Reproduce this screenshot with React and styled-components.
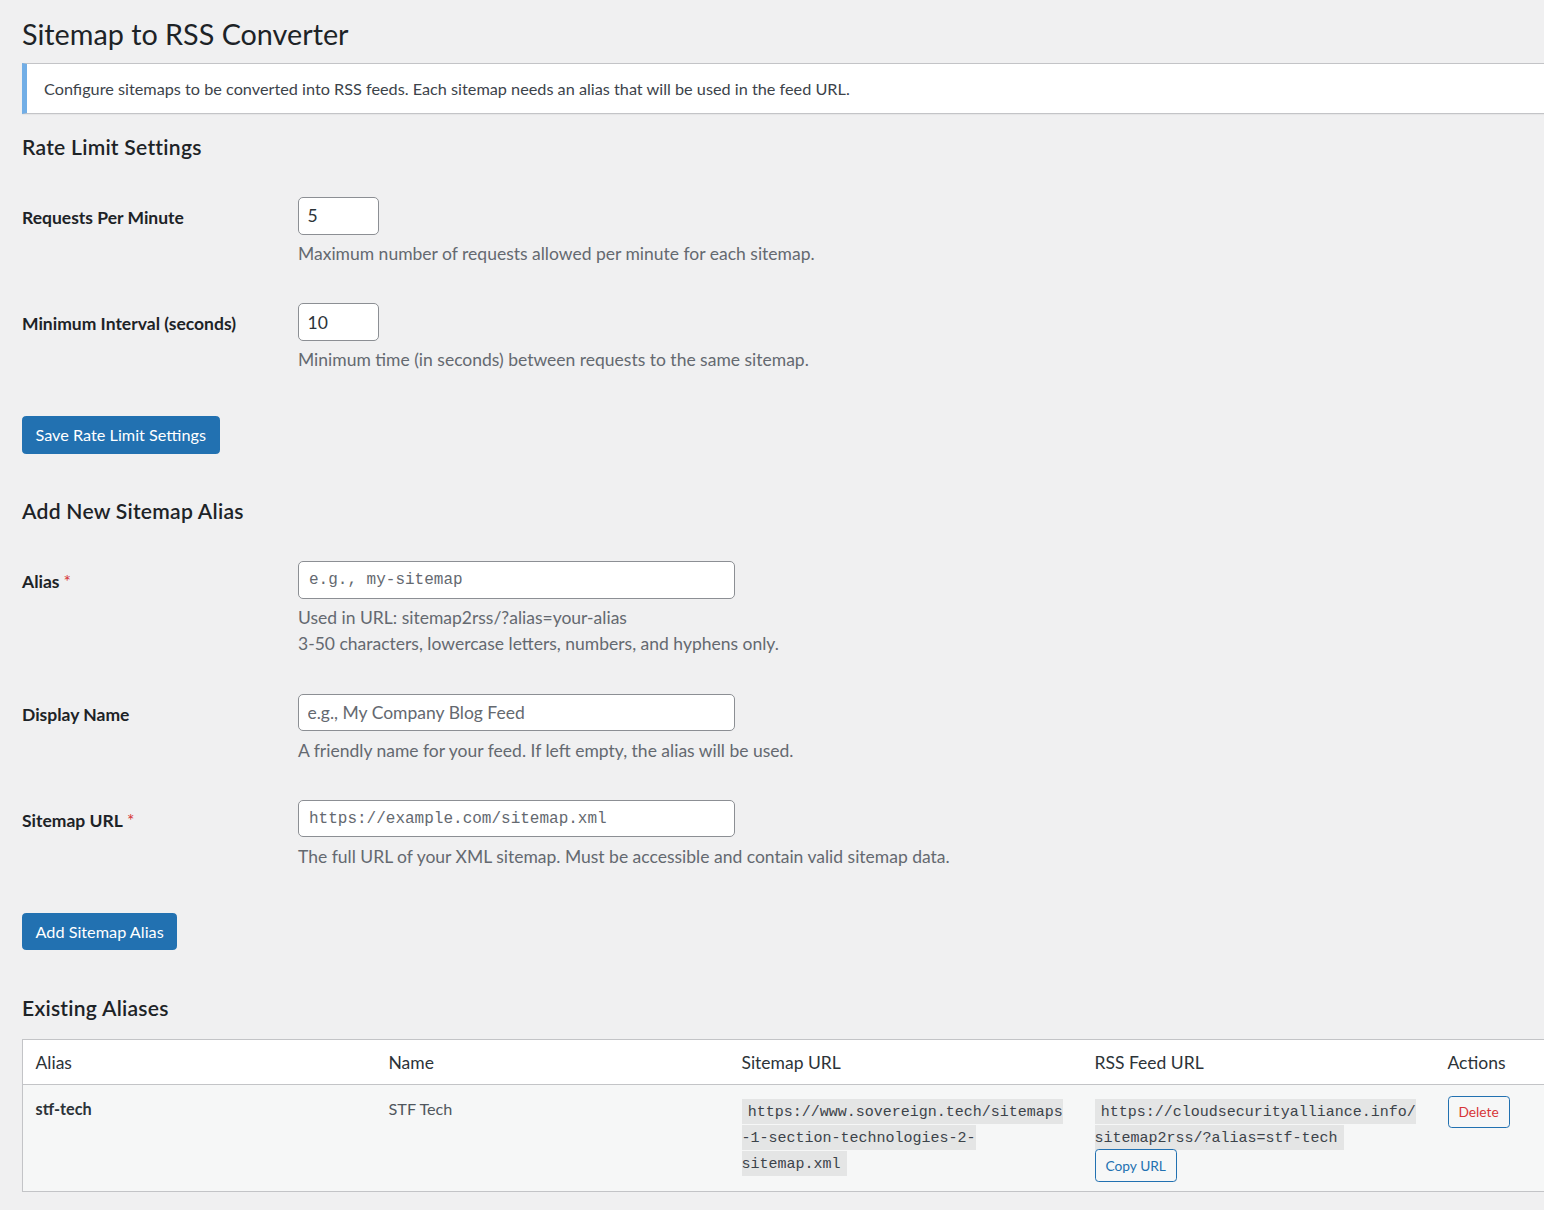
import React from "react";
import styled, { createGlobalStyle } from "styled-components";

const SANS = `Lato, "Open Sans", Roboto, sans-serif`;
const MONO = `"Liberation Mono", "DejaVu Sans Mono", monospace`;

const GlobalStyle = createGlobalStyle`
  html, body {
    margin: 0;
    padding: 0;
    background: #f0f0f1;
    overflow: hidden;
  }
  body {
    font-family: ${SANS};
    color: #3c434a;
    font-size: 16.25px;
    line-height: 1.4;
  }
  *, *::before, *::after { box-sizing: border-box; }
`;

const Wrap = styled.div`
  width: 1800px;
  padding: 16px 0 0 22px;
`;

const PageTitle = styled.h1`
  margin: 0;
  font-size: 28.75px;
  font-weight: 400;
  line-height: 37px;
  color: #1d2327;
`;

const Notice = styled.div`
  margin: 10px 0 19px;
  background: #fff;
  border: 1px solid #c3c4c7;
  border-left: 5px solid #72aee6;
  box-shadow: 0 1px 1px rgba(0, 0, 0, 0.04);
  padding: 13.3px 0 11.3px 17px;
`;

const NoticeText = styled.p`
  margin: 0;
  font-size: 16.25px;
  line-height: 24.4px;
  color: #3c434a;
`;

const SectionTitle = styled.h2`
  margin: 0 0 17px;
  font-size: 21.1px;
  line-height: 28px;
  font-weight: 600;
  letter-spacing: 0.25px;
  color: #1d2327;
`;

const FormTable = styled.div`
  display: flex;
  flex-direction: column;
`;

const FieldRow = styled.div`
  display: grid;
  grid-template-columns: 276px 1fr;
  align-items: start;
`;

const FieldLabel = styled.label`
  padding-top: 29px;
  font-size: 17.5px;
  line-height: 22.75px;
  font-weight: 700;
  color: #1d2327;
`;

const Req = styled.span`
  color: #d63638;
  font-weight: 400;
  margin-left: 4px;
`;

const FieldBody = styled.div`
  padding: 19px 0 17px;
`;

const TextInput = styled.input`
  display: block;
  width: ${(p) => (p.$size === "small" ? "81px" : "437px")};
  height: 37.5px;
  margin: 0;
  padding: 0 ${(p) => (p.$mono ? "10px" : "8.5px")};
  border: 1px solid #8c8f94;
  border-radius: 5px;
  background: #fff;
  color: #2c3338;
  font-family: ${(p) => (p.$mono ? MONO : SANS)};
  font-size: ${(p) => (p.$mono ? "16px" : "17.5px")};
  outline: none;
  &::placeholder {
    color: #646970;
    opacity: 1;
  }
`;

const Description = styled.p`
  margin: 6.5px 0 0;
  font-size: 17.5px;
  line-height: 26.25px;
  color: #646970;
`;

const SubmitRow = styled.div`
  margin: 25.5px 0 43.5px;
`;

const PrimaryButton = styled.button`
  display: inline-flex;
  align-items: center;
  height: 37.5px;
  margin: 0;
  padding: 0 12.5px;
  border: 1px solid #2271b1;
  border-radius: 3.75px;
  background: #2271b1;
  color: #fff;
  font-family: ${SANS};
  font-size: 16.25px;
  cursor: pointer;
`;

const ListTable = styled.table`
  margin-top: 4px;
  width: 1767px;
  table-layout: fixed;
  border-collapse: separate;
  border-spacing: 0;
  border: 1px solid #c3c4c7;
  background: #fff;
  box-shadow: 0 1px 1px rgba(0, 0, 0, 0.04);
`;

const HeadCell = styled.th`
  padding: 11px 12.5px 9px;
  font-size: 17.5px;
  line-height: 24.5px;
  font-weight: 400;
  text-align: left;
  color: #2c3338;
  border-bottom: 1px solid #c3c4c7;
  background: #fff;
`;

const Cell = styled.td`
  padding: 10.5px 12.5px 9.5px;
  font-size: 16.25px;
  line-height: 26px;
  color: ${(p) => (p.$strong ? "#2c3338" : "#50575e")};
  font-weight: ${(p) => (p.$strong ? 700 : 400)};
  vertical-align: top;
  background: #f6f7f7;
  overflow-wrap: break-word;
`;

const Code = styled.code`
  font-family: ${MONO};
  font-size: 15px;
  line-height: 17px;
  vertical-align: -1.5px;
  color: #3c434a;
  background: rgba(0, 0, 0, 0.07);
  padding: 5px 6.25px 2.5px;
  margin: 0;
`;

const FeedCell = styled.div`
  display: flex;
  flex-direction: column;
  align-items: stretch;
`;

const CodeBlock = styled.div`
  width: 100%;
`;

const SmallButton = styled.button`
  display: inline-flex;
  align-items: center;
  align-self: flex-start;
  height: 32.5px;
  margin: ${(p) => (p.$stacked ? "1.5px 0 0" : "0")};
  padding: 0 10px;
  border: 1px solid #2271b1;
  border-radius: 3.75px;
  background: #f6f7f7;
  color: ${(p) => (p.$danger ? "#d63638" : "#2271b1")};
  font-family: ${SANS};
  font-size: 13.75px;
  cursor: pointer;
`;

const columns = ["Alias", "Name", "Sitemap URL", "RSS Feed URL", "Actions"];

const aliases = [
  {
    alias: "stf-tech",
    name: "STF Tech",
    sitemap: "https://www.sovereign.tech/sitemaps-1-section-technologies-2-sitemap.xml",
    feed: "https://cloudsecurityalliance.info/sitemap2rss/?alias=stf-tech",
  },
];

export default function App() {
  return (
    <>
      <GlobalStyle />
      <Wrap>
        <PageTitle>Sitemap to RSS Converter</PageTitle>
        <Notice>
          <NoticeText>
            Configure sitemaps to be converted into RSS feeds. Each sitemap needs an alias that will be used in the feed URL.
          </NoticeText>
        </Notice>

        <SectionTitle>Rate Limit Settings</SectionTitle>
        <FormTable>
          <FieldRow>
            <FieldLabel>Requests Per Minute</FieldLabel>
            <FieldBody>
              <TextInput $size="small" defaultValue="5" />
              <Description>Maximum number of requests allowed per minute for each sitemap.</Description>
            </FieldBody>
          </FieldRow>
          <FieldRow>
            <FieldLabel>Minimum Interval (seconds)</FieldLabel>
            <FieldBody>
              <TextInput $size="small" defaultValue="10" />
              <Description>Minimum time (in seconds) between requests to the same sitemap.</Description>
            </FieldBody>
          </FieldRow>
        </FormTable>
        <SubmitRow>
          <PrimaryButton>Save Rate Limit Settings</PrimaryButton>
        </SubmitRow>

        <SectionTitle>Add New Sitemap Alias</SectionTitle>
        <FormTable>
          <FieldRow>
            <FieldLabel>
              Alias<Req>*</Req>
            </FieldLabel>
            <FieldBody>
              <TextInput $mono placeholder="e.g., my-sitemap" />
              <Description>
                Used in URL: sitemap2rss/?alias=your-alias
                <br />
                3-50 characters, lowercase letters, numbers, and hyphens only.
              </Description>
            </FieldBody>
          </FieldRow>
          <FieldRow>
            <FieldLabel>Display Name</FieldLabel>
            <FieldBody>
              <TextInput placeholder="e.g., My Company Blog Feed" />
              <Description>A friendly name for your feed. If left empty, the alias will be used.</Description>
            </FieldBody>
          </FieldRow>
          <FieldRow>
            <FieldLabel>
              Sitemap URL<Req>*</Req>
            </FieldLabel>
            <FieldBody>
              <TextInput $mono placeholder="https://example.com/sitemap.xml" />
              <Description>The full URL of your XML sitemap. Must be accessible and contain valid sitemap data.</Description>
            </FieldBody>
          </FieldRow>
        </FormTable>
        <SubmitRow>
          <PrimaryButton>Add Sitemap Alias</PrimaryButton>
        </SubmitRow>

        <SectionTitle>Existing Aliases</SectionTitle>
        <ListTable>
          <colgroup>
            {columns.map((c) => (
              <col key={c} style={{ width: 353 }} />
            ))}
          </colgroup>
          <thead>
            <tr>
              {columns.map((c) => (
                <HeadCell key={c}>{c}</HeadCell>
              ))}
            </tr>
          </thead>
          <tbody>
            {aliases.map((a) => (
              <tr key={a.alias}>
                <Cell $strong>{a.alias}</Cell>
                <Cell>{a.name}</Cell>
                <Cell>
                  <Code>{a.sitemap}</Code>
                </Cell>
                <Cell>
                  <FeedCell>
                    <CodeBlock>
                      <Code>{a.feed}</Code>
                    </CodeBlock>
                    <SmallButton $stacked>Copy URL</SmallButton>
                  </FeedCell>
                </Cell>
                <Cell>
                  <SmallButton $danger>Delete</SmallButton>
                </Cell>
              </tr>
            ))}
          </tbody>
        </ListTable>
      </Wrap>
    </>
  );
}
